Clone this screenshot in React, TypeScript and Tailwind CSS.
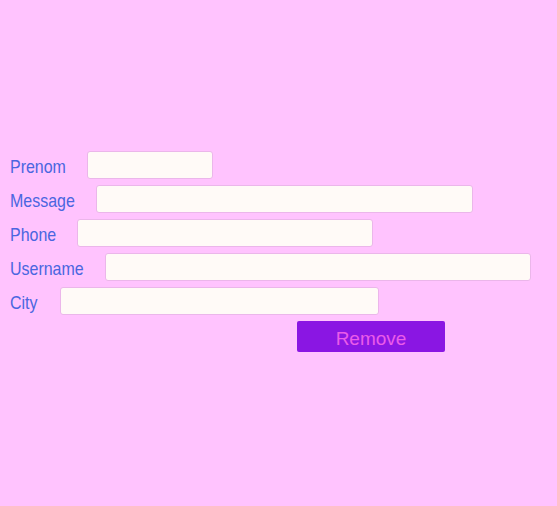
import React from "react";

// label column width = where each input starts (minus page padding)
const fields = [
  { label: "Prenom", labelW: "w-[77px]", width: "w-[126px]" },
  { label: "Message", labelW: "w-[86px]", width: "w-[377px]" },
  { label: "Phone", labelW: "w-[67px]", width: "w-[296px]" },
  { label: "Username", labelW: "w-[95px]", width: "w-[426px]" },
  { label: "City", labelW: "w-[50px]", width: "w-[319px]" },
];

export default function App() {
  return (
    <div className="min-h-[506px] w-full bg-[#ffc3fe] font-['Liberation_Sans',Arial,sans-serif]">
      <div className="flex flex-col gap-[6px] px-[10px] pt-[151px]">
        {fields.map((f) => (
          <div key={f.label} className="flex h-[28px] items-center">
            <div className={`${f.labelW} shrink-0`}>
              <label className="mt-[7px] inline-block origin-left scale-x-[0.84] whitespace-nowrap text-[19px] leading-none text-[#4a66e0]">
                {f.label}
              </label>
            </div>
            <input
              type="text"
              className={`${f.width} h-[28px] rounded-[3px] border border-[#ebb6ea] bg-[#fffaf7] outline-none`}
            />
          </div>
        ))}
        <div className="flex">
          <button className="ml-[287px] h-[31px] w-[148px] rounded-[2px] bg-[#8a16e3] pt-[4px] text-[19px] leading-none text-[#ea5ce9]">
            Remove
          </button>
        </div>
      </div>
    </div>
  );
}
